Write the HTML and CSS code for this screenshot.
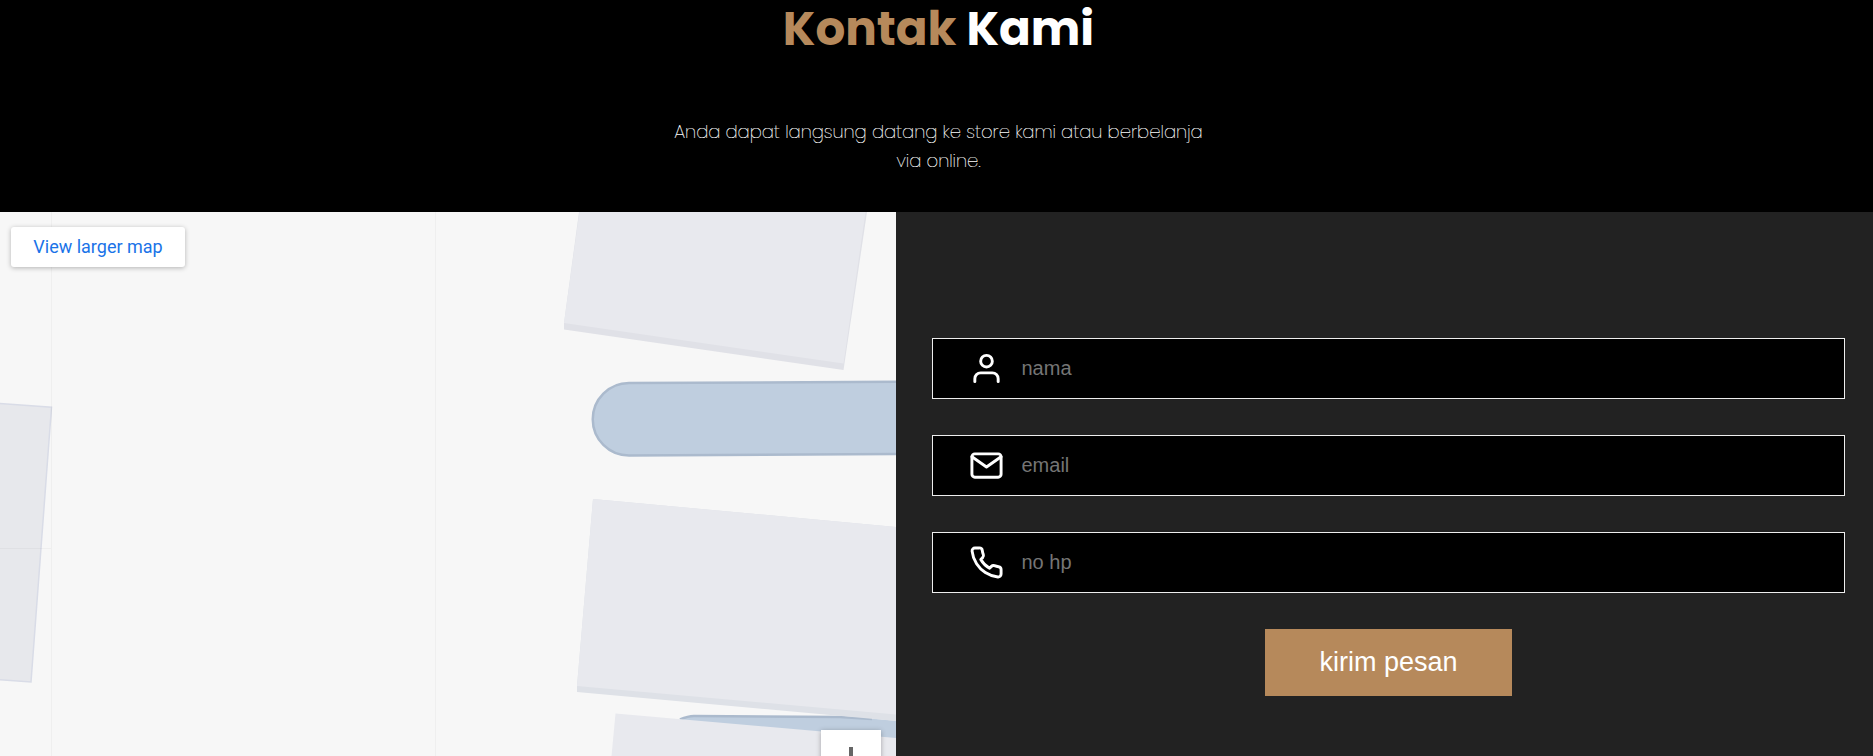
FILE: index.html
```html
<!DOCTYPE html>
<html lang="id">
<head>
<meta charset="utf-8">
<title>Kontak Kami</title>
<link rel="stylesheet" href="styles.css">
</head>
<body>
<section class="contact">
  <header class="intro">
    <h2 class="title"><span class="accent">Kontak</span> Kami</h2>
    <p class="lead"><span class="line">Anda dapat langsung datang ke store kami atau berbelanja</span> <span class="line">via online.</span></p>
  </header>
  <div class="row">
    <div class="map">
      <svg class="map-art" viewBox="0 212 896 544" width="896" height="544">
        <rect y="212" width="896" height="544" fill="#f7f7f7"/>
        <path d="M-5 403.200L51.500 407.300L31 682L-5 679.300Z" fill="#e7e8ec" stroke="#d9dce7" stroke-width="1.500"/>
        <path d="M51.500 212V756M435.500 212V756M0 548.500H51" stroke="#000" stroke-opacity=".03" fill="none"/>
        <path d="M579 212L564 323V329.500L843.500 370L867 212Z" fill="#e0e1e7"/>
        <path d="M579.500 212L564 323L843.500 363.500L865.500 212Z" fill="#e8e9ee"/>
        <path d="M910 381.800L629 383A36.250 36.250 0 0 0 629 455.500L910 453.800Z" fill="#bfcedf" stroke="#abbacd" stroke-width="2.500"/>
        <path d="M675 724Q684 716 694 716L860 717.500L910 722V750L675 724Z" fill="#bfcedf"/>
        <path d="M680 719.500Q688 716 694 716L840 717L872 719" fill="none" stroke="#abbacd" stroke-width="2.500"/>
        <path d="M593 499L577 686V692L896 721V527Z" fill="#dee1e7"/>
        <path d="M593 499L577 686L896 714.500V527Z" fill="#e8e9ee"/>
        <path d="M615.500 713.500L611.500 756H896V738Z" fill="#e8e9ee"/>
      </svg>
      <a class="larger">View larger map</a>
      <div class="zoom"><i class="plus"></i></div>
    </div>
    <form class="form">
      <label class="field">
        <svg class="icon" viewBox="0 0 24 24"><path d="M20 21v-2a4 4 0 0 0-4-4H8a4 4 0 0 0-4 4v2"/><circle cx="12" cy="7" r="4"/></svg>
        <input class="input" type="text" placeholder="nama">
      </label>
      <label class="field">
        <svg class="icon" viewBox="0 0 24 24"><path d="M4 4h16c1.100 0 2 .9 2 2v12c0 1.100-.9 2-2 2H4c-1.100 0-2-.9-2-2V6c0-1.100.9-2 2-2z"/><path d="M22 6l-10 7L2 6"/></svg>
        <input class="input" type="text" placeholder="email">
      </label>
      <label class="field">
        <svg class="icon" viewBox="0 0 24 24"><path d="M22 16.920v3a2 2 0 0 1-2.180 2 19.790 19.790 0 0 1-8.630-3.070 19.500 19.500 0 0 1-6-6 19.790 19.790 0 0 1-3.070-8.670A2 2 0 0 1 4.110 2h3a2 2 0 0 1 2 1.720 12.840 12.840 0 0 0 .7 2.810 2 2 0 0 1-.45 2.110L8.090 9.910a16 16 0 0 0 6 6l1.270-1.270a2 2 0 0 1 2.110-.45 12.840 12.840 0 0 0 2.810.7A2 2 0 0 1 22 16.920z"/></svg>
        <input class="input" type="text" placeholder="no hp">
      </label>
      <button class="send" type="button">kirim pesan</button>
    </form>
  </div>
</section>
</body>
</html>
```
FILE: styles.css
```css
* { box-sizing: border-box; }
body { margin: 0; background: #000; color: #fff; overflow: hidden; }
.contact { height: 756px; display: flex; flex-direction: column; }
.intro { height: 212px; flex: none; display: flex; flex-direction: column; align-items: center; padding-left: 4px; }
.title {
  margin: 0; height: 58px; line-height: 57px; white-space: nowrap;
  font-family: Poppins, Inter, sans-serif; font-size: 46.800px; font-weight: 700;
}
.accent { color: #b6895b; }
.lead {
  margin: 59px 0 0; text-align: center; line-height: 29px;
  font-family: Poppins, Lato, sans-serif; font-size: 18px; font-weight: 100;
  -webkit-text-stroke: .2px #fff;
}
.line { display: block; white-space: nowrap; }
.row { flex: 1; display: flex; }
.map { position: relative; width: 896px; height: 544px; flex: none; overflow: hidden; }
.map-art { display: block; }
.larger {
  position: absolute; left: 11px; top: 15px; width: 174px; height: 40px;
  border-radius: 3px; background: #fff; box-shadow: 0 1px 5px rgba(0,0,0,.28);
  color: #1a73e8; font: 18px/40px Roboto, sans-serif; text-align: center;
}
.zoom {
  position: absolute; left: 821px; top: 518px; width: 60px; height: 60px;
  background: #fff; box-shadow: 0 1px 5px rgba(0,0,0,.3);
  display: flex; justify-content: center; padding-top: 17px;
}
.plus { width: 4px; height: 26px; background: #666; }
.form {
  flex: 1; background: #222; padding: 126px 28px 0 36px;
  display: flex; flex-direction: column; align-items: center; gap: 36px;
}
.field {
  width: 100%; height: 61px; flex: none; display: flex; align-items: center;
  border: 1px solid #eee; background: #000; padding-left: 35.500px;
}
.icon {
  width: 35px; height: 35px; flex: none; fill: none; stroke: #fff; margin-bottom: 1px;
  stroke-width: 2; stroke-linecap: round; stroke-linejoin: round;
}
.input {
  flex: 1; margin-left: 18px; padding: 0; border: 0; outline: 0; background: none;
  color: #fff; font: 20px "Liberation Sans", Arial, sans-serif;
}
.input::placeholder { color: #757575; }
.send {
  width: 247px; height: 67px; border: 0; padding: 0; background: #b6895b; color: #fff;
  font: 27px "Liberation Sans", Arial, sans-serif;
}
```
